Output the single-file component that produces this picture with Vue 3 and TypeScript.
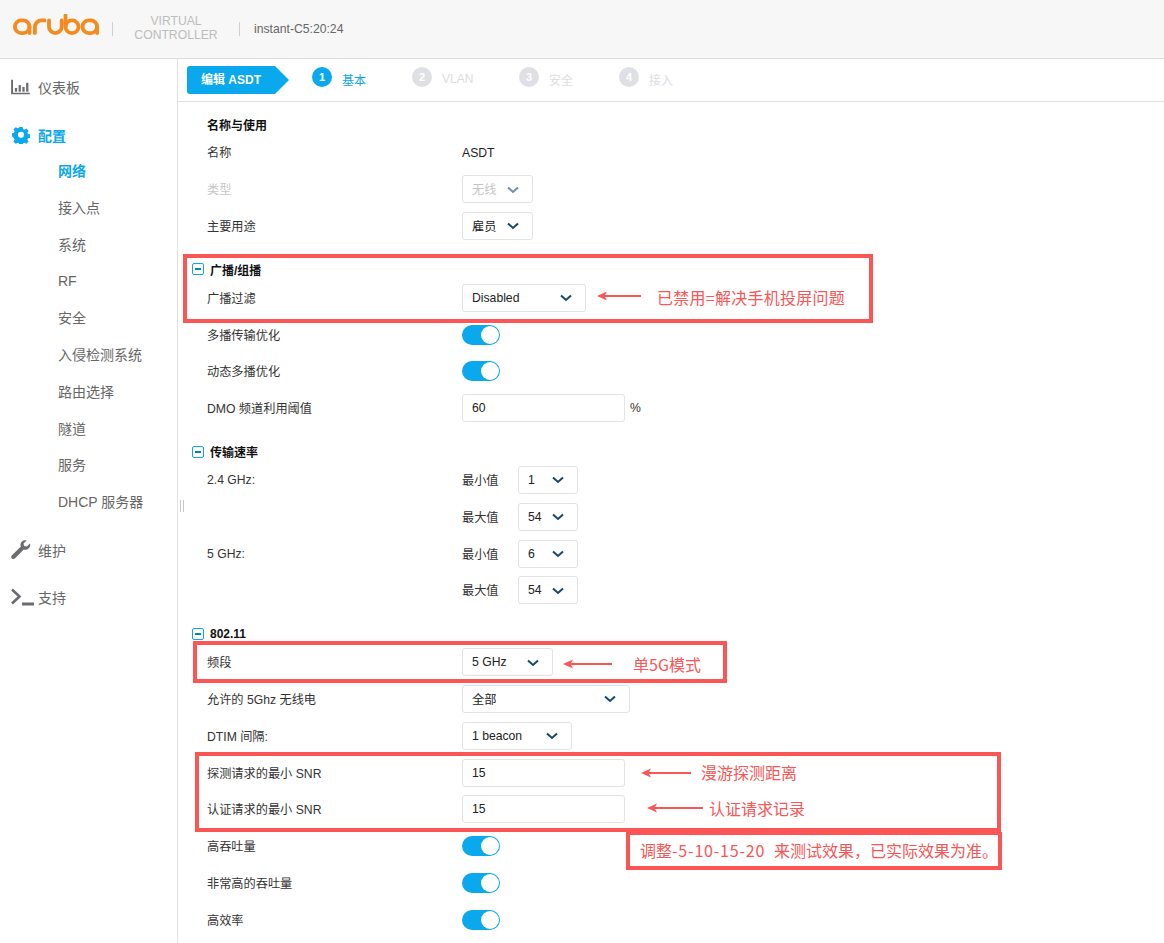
<script setup lang="ts">
type Row = {
  label?: string
  kind: 'text' | 'select' | 'toggle' | 'input' | 'rate' | 'none'
  value?: string
  width?: number
  disabled?: boolean
  suffix?: string
  rate?: string
}
type Section = { title?: string; plain?: boolean; rows: Row[] }

const nav = ['网络', '接入点', '系统', 'RF', '安全', '入侵检测系统', '路由选择', '隧道', '服务', 'DHCP 服务器']
const steps = [
  { n: 1, t: '基本', on: true, cls: 's1' },
  { n: 2, t: 'VLAN', on: false, cls: 's2' },
  { n: 3, t: '安全', on: false, cls: 's3' },
  { n: 4, t: '接入', on: false, cls: 's4' }
]
const sections: Section[] = [
  {
    title: '名称与使用', plain: true,
    rows: [
      { label: '名称', kind: 'text', value: 'ASDT' },
      { label: '类型', kind: 'select', value: '无线', width: 71, disabled: true },
      { label: '主要用途', kind: 'select', value: '雇员', width: 71 }
    ]
  },
  {
    title: '广播/组播',
    rows: [
      { label: '广播过滤', kind: 'select', value: 'Disabled', width: 124 },
      { label: '多播传输优化', kind: 'toggle' },
      { label: '动态多播优化', kind: 'toggle' },
      { label: 'DMO 频道利用阈值', kind: 'input', value: '60', suffix: '%' }
    ]
  },
  {
    title: '传输速率',
    rows: [
      { label: '2.4 GHz:', kind: 'rate', rate: '最小值', value: '1' },
      { kind: 'rate', rate: '最大值', value: '54' },
      { label: '5 GHz:', kind: 'rate', rate: '最小值', value: '6' },
      { kind: 'rate', rate: '最大值', value: '54' }
    ]
  },
  {
    title: '802.11',
    rows: [
      { label: '频段', kind: 'select', value: '5 GHz', width: 91 },
      { label: '允许的 5Ghz 无线电', kind: 'select', value: '全部', width: 168 },
      { label: 'DTIM 间隔:', kind: 'select', value: '1 beacon', width: 110 },
      { label: '探测请求的最小 SNR', kind: 'input', value: '15' },
      { label: '认证请求的最小 SNR', kind: 'input', value: '15' },
      { label: '高吞吐量', kind: 'toggle' },
      { label: '非常高的吞吐量', kind: 'toggle' },
      { label: '高效率', kind: 'toggle' }
    ]
  }
]
const arrows = [
  { cls: 'a1', w: 44 },
  { cls: 'a2', w: 49 },
  { cls: 'a3', w: 50 },
  { cls: 'a4', w: 56 }
]
</script>

<template>
  <div class="page">
    <header class="top">
      <svg class="logo" width="86" height="30" viewBox="0 0 86 30" role="img" aria-label="aruba" fill="none" stroke="#f58a1f" stroke-width="3.8" stroke-linecap="round">
        <rect x="1.9" y="6.4" width="14.600" height="12.700" rx="6.350" />
        <line x1="16.500" y1="12.700" x2="16.500" y2="19.100" />
        <path d="M21.900 19.100V13a6.600 6.600 0 0 1 6.600-6.600h3" />
        <path d="M36 6.400v6.300a6.350 6.350 0 0 0 12.700 0V6.400" />
        <path d="M52.500 1.500V12.700" />
        <rect x="52.500" y="6.400" width="13" height="12.700" rx="6.350" />
        <rect x="69.500" y="6.400" width="14.600" height="12.700" rx="6.350" />
        <line x1="84.100" y1="12.700" x2="84.100" y2="19.100" />
      </svg>
      <span class="vr first"></span>
      <div class="vc">VIRTUAL<br />CONTROLLER</div>
      <span class="vr second"></span>
      <span class="inst">instant-C5:20:24</span>
    </header>

    <div class="body">
      <aside class="side">
        <div class="item">
          <svg width="19" height="15" viewBox="0 0 20 16" fill="#6b6b70">
            <path d="M0 0h2v14h18v2H0z" />
            <rect x="4" y="9" width="2.400" height="4" />
            <rect x="8" y="6" width="2.400" height="7" />
            <rect x="12" y="8" width="2.400" height="5" />
            <rect x="16" y="3.500" width="2.400" height="9.500" />
          </svg>
          <span>仪表板</span>
        </div>
        <div class="item active">
          <svg class="gear" width="18" height="18" viewBox="0 0 20 20" fill="#0aa8ec">
            <path fill-rule="evenodd" d="M8.200 1h3.600l.5 2.400 1.500.7 2.100-1.300 2.500 2.600-1.300 2 .7 1.600 2.200.5v3.600l-2.200.5-.7 1.600 1.300 2-2.500 2.600-2.100-1.300-1.500.7-.5 2.300H8.200l-.5-2.300-1.500-.7-2.100 1.300-2.500-2.600 1.300-2-.7-1.600L0 11.500V8l2.200-.5.7-1.600-1.300-2 2.500-2.600 2.100 1.300 1.500-.7zM10 6.400a3.400 3.400 0 1 0 0 6.800 3.400 3.400 0 0 0 0-6.800z" />
          </svg>
          <span>配置</span>
        </div>
        <ul class="sub">
          <li v-for="(n, i) in nav" :key="n" :class="{ cur: i === 0 }">{{ n }}</li>
        </ul>
        <div class="item tools">
          <svg width="20" height="20" viewBox="0 0 20 20" fill="#6b6b70">
            <path d="M19 3.600l-3.200 3-2.600-.6-.7-2.600L15.600.4C12.800-.5 9.700 1.300 9.500 4.400c0 .8.100 1.500.4 2.100L1 15.200c-1 1-1 2.300-.1 3.200.9.900 2.300.8 3.200-.1l8.700-8.700c3.700 1 7.400-2.300 6.200-6z" />
          </svg>
          <span>维护</span>
        </div>
        <div class="item last">
          <svg width="24" height="18" viewBox="0 0 24 18" fill="none" stroke="#6b6b70" stroke-width="2.600">
            <path d="M1 1.500L8.500 8.500L1 15.500" />
            <path d="M11 16h12" stroke-width="3" />
          </svg>
          <span>支持</span>
        </div>
      </aside>

      <main class="main">
        <nav class="tabs">
          <div class="crumb">编辑 ASDT</div>
          <div v-for="s in steps" :key="s.n" class="step" :class="[s.cls, { on: s.on }]">
            <span class="num">{{ s.n }}</span>
            <span class="stxt">{{ s.t }}</span>
          </div>
        </nav>

        <div class="form">
          <section v-for="sec in sections" :key="sec.title" class="sec">
            <div class="head" :class="{ plain: sec.plain }">
              <span v-if="!sec.plain" class="minus"></span>
              <span>{{ sec.title }}</span>
            </div>
            <div v-for="(r, i) in sec.rows" :key="i" class="row">
              <label class="lab" :class="{ dim: r.disabled }">{{ r.label }}</label>
              <div class="ctl">
                <span v-if="r.kind === 'text'" class="plainv">{{ r.value }}</span>

                <div v-else-if="r.kind === 'select'" class="sel" :class="{ dis: r.disabled }" :style="{ width: r.width + 'px' }">
                  <span>{{ r.value }}</span>
                  <svg class="chev" width="12" height="8" viewBox="0 0 12 8" fill="none" stroke-width="2"><path d="M1 1.500L6 6L11 1.500" /></svg>
                </div>

                <span v-else-if="r.kind === 'toggle'" class="tog"><i></i></span>

                <template v-else-if="r.kind === 'input'">
                  <input class="inp" readonly :value="r.value" />
                  <span v-if="r.suffix" class="suf">{{ r.suffix }}</span>
                </template>

                <template v-else-if="r.kind === 'rate'">
                  <span class="rl">{{ r.rate }}</span>
                  <div class="sel rate">
                    <span>{{ r.value }}</span>
                    <svg class="chev" width="12" height="8" viewBox="0 0 12 8" fill="none" stroke-width="2"><path d="M1 1.500L6 6L11 1.500" /></svg>
                  </div>
                </template>
              </div>
            </div>
          </section>
        </div>
      </main>
    </div>

    <span class="grip"></span>

    <div class="box b1"></div>
    <div class="box b2"></div>
    <div class="box b3"></div>
    <div class="box b4"></div>
    <svg v-for="a in arrows" :key="a.cls" class="arrow" :class="a.cls" :width="a.w" height="10" :viewBox="`0 0 ${a.w} 10`">
      <path :d="`M0 5L10 .5L8 4H${a.w}V6H8L10 9.500Z`" fill="#fb5555" />
    </svg>
    <span class="note n1">已禁用=解决手机投屏问题</span>
    <span class="note n2">单5G模式</span>
    <span class="note n3">漫游探测距离</span>
    <span class="note n4">认证请求记录</span>
    <span class="note n5">调整<span class="wide">-5-10-15-20&nbsp;&nbsp;</span>来测试效果，已实际效果为准。</span>
  </div>
</template>

<style>
html, body { margin: 0; background: #fff; }
</style>

<style scoped>
.page {
  position: relative;
  width: 1164px;
  height: 943px;
  overflow: hidden;
  display: flex;
  flex-direction: column;
  font-family: "Liberation Sans", "Noto Sans CJK SC", sans-serif;
  font-size: 12.200px;
  color: #222;
}
.top {
  height: 58px;
  flex: none;
  background: #f7f7f7;
  border-bottom: 1px solid #dcdcdc;
  display: flex;
  align-items: center;
}
.logo { margin-left: 13px; flex: none; }
.vr { width: 1px; height: 14px; background: #cfcfcf; flex: none; }
.vr.first { margin-left: 13px; }
.vc {
  width: 126px;
  text-align: center;
  color: #bcbcbc;
  line-height: 14px;
  font-size: 12.200px;
  margin-top: -2px;
}
.inst { margin-left: 14px; color: #666; font-size: 12.200px; }
.body { flex: 1; display: flex; min-height: 0; }
.side {
  width: 177px;
  flex: none;
  border-right: 1px solid #e2e2e2;
  padding-top: 4px;
}
.item {
  height: 48px;
  display: flex;
  align-items: center;
  position: relative;
  padding-left: 38px;
  font-size: 14px;
  color: #666;
}
.item svg { position: absolute; left: 11px; top: 50%; transform: translateY(-50%); }
.item svg.gear { left: 12px; }
.item.active { color: #0aa8ec; font-weight: bold; }
.item.tools { margin-top: 4.600px; }
.item.last { margin-top: -1px; }
.sub {
  list-style: none;
  margin: -6px 0 0;
  padding: 0;
}
.sub li {
  height: 36.800px;
  line-height: 36.800px;
  padding-left: 58px;
  font-size: 14px;
  color: #666;
}
.sub li.cur { color: #0aa8ec; font-weight: bold; }
.main { flex: 1; min-width: 0; display: flex; flex-direction: column; }
.tabs {
  height: 43px;
  flex: none;
  box-sizing: border-box;
  border-bottom: 1px solid #e2e2e2;
  display: flex;
  padding: 7px 0 0 9px;
  align-items: flex-start;
}
.crumb {
  width: 102px;
  height: 28px;
  box-sizing: border-box;
  background: #0aa8ec;
  color: #fff;
  line-height: 28px;
  padding-left: 14px;
  font-size: 12px;
  font-weight: bold;
  border-radius: 3px 0 0 3px;
  clip-path: polygon(0 0, 88px 0, 100% 50%, 88px 100%, 0 100%);
}
.step { display: flex; align-items: center; height: 22px; color: #dcdde2; }
.step.on { color: #0aa8ec; }
.s1 { margin-left: 23px; width: 100px; }
.s2 { width: 107px; }
.s3 { width: 100px; }
.num {
  width: 20px;
  height: 20px;
  border-radius: 50%;
  background: #dfe0e5;
  color: #fff;
  font-size: 11px;
  font-weight: bold;
  line-height: 20px;
  text-align: center;
  margin-right: 10px;
  flex: none;
}
.on .num { background: #0aa8ec; }
.stxt { font-size: 12px; margin-top: 4px; }
.form { padding-top: 12px; }
.sec { margin-top: 15px; }
.sec:first-child { margin-top: 0; }
.head {
  height: 20px;
  display: flex;
  align-items: center;
  padding-left: 14px;
  font-size: 12px;
  font-weight: bold;
  color: #111;
}
.head.plain { padding-left: 29px; }
.minus {
  width: 10px;
  height: 10px;
  border: 1.500px solid #0aa8ec;
  border-radius: 2px;
  margin-right: 6px;
  position: relative;
  flex: none;
}
.minus::after {
  content: "";
  position: absolute;
  left: 2px;
  right: 2px;
  top: 4px;
  height: 2px;
  background: #0a7fb8;
}
.row { height: 36.800px; display: flex; align-items: center; }
.lab { width: 255px; padding-left: 29px; flex: none; color: #333; }
.lab.dim { color: #c6c6c6; }
.ctl { display: flex; align-items: center; }
.plainv { color: #222; padding-top: 1px; }
.sel {
  height: 28px;
  box-sizing: border-box;
  border: 1px solid #e3e3e3;
  border-radius: 3px;
  background: #fff;
  display: flex;
  align-items: center;
  justify-content: space-between;
  padding: 0 13px 0 9px;
  color: #222;
}
.sel.rate { width: 60px; }
.chev { stroke: #17476b; flex: none; margin-top: 1px; }
.sel.dis { color: #c6c6c6; }
.sel.dis .chev { stroke: #6d90aa; }
.tog {
  width: 38px;
  height: 20px;
  border-radius: 10px;
  background: #0aa8ec;
  position: relative;
  display: block;
}
.tog i {
  position: absolute;
  right: 1px;
  top: 1px;
  width: 18px;
  height: 18px;
  border-radius: 50%;
  background: #fff;
}
.inp {
  width: 163px;
  height: 28px;
  box-sizing: border-box;
  border: 1px solid #e3e3e3;
  border-radius: 3px;
  padding: 0 9px;
  font: inherit;
  color: #222;
  outline: none;
}
.suf { margin-left: 5px; color: #333; }
.rl { width: 56px; color: #333; }

.grip {
  position: absolute;
  left: 180px;
  top: 500px;
  width: 2px;
  height: 12px;
  border-left: 1px solid #c8c8c8;
  border-right: 1px solid #c8c8c8;
}
.box { position: absolute; border: 4px solid #fb5555; box-sizing: border-box; }
.b1 { left: 183px; top: 254px; width: 690px; height: 69px; }
.b2 { left: 193px; top: 641px; width: 534px; height: 42px; }
.b3 { left: 195px; top: 752px; width: 806px; height: 80px; }
.b4 { left: 626px; top: 832px; width: 376px; height: 38px; border-top-width: 3px; }
.arrow { position: absolute; }
.a1 { left: 597px; top: 291px; }
.a2 { left: 563px; top: 659px; }
.a3 { left: 641px; top: 768px; }
.a4 { left: 647px; top: 803px; }
.note {
  position: absolute;
  color: #fb5555;
  font-family: "Noto Sans CJK SC", sans-serif;
  font-size: 16px;
  line-height: 20px;
  white-space: nowrap;
}
.wide { letter-spacing: 0.800px; }
.n1 { left: 657px; top: 287px; letter-spacing: 0.250px; }
.n2 { left: 633px; top: 654px; }
.n3 { left: 701px; top: 762px; }
.n4 { left: 709px; top: 798px; }
.n5 { left: 640px; top: 840px; }
</style>
